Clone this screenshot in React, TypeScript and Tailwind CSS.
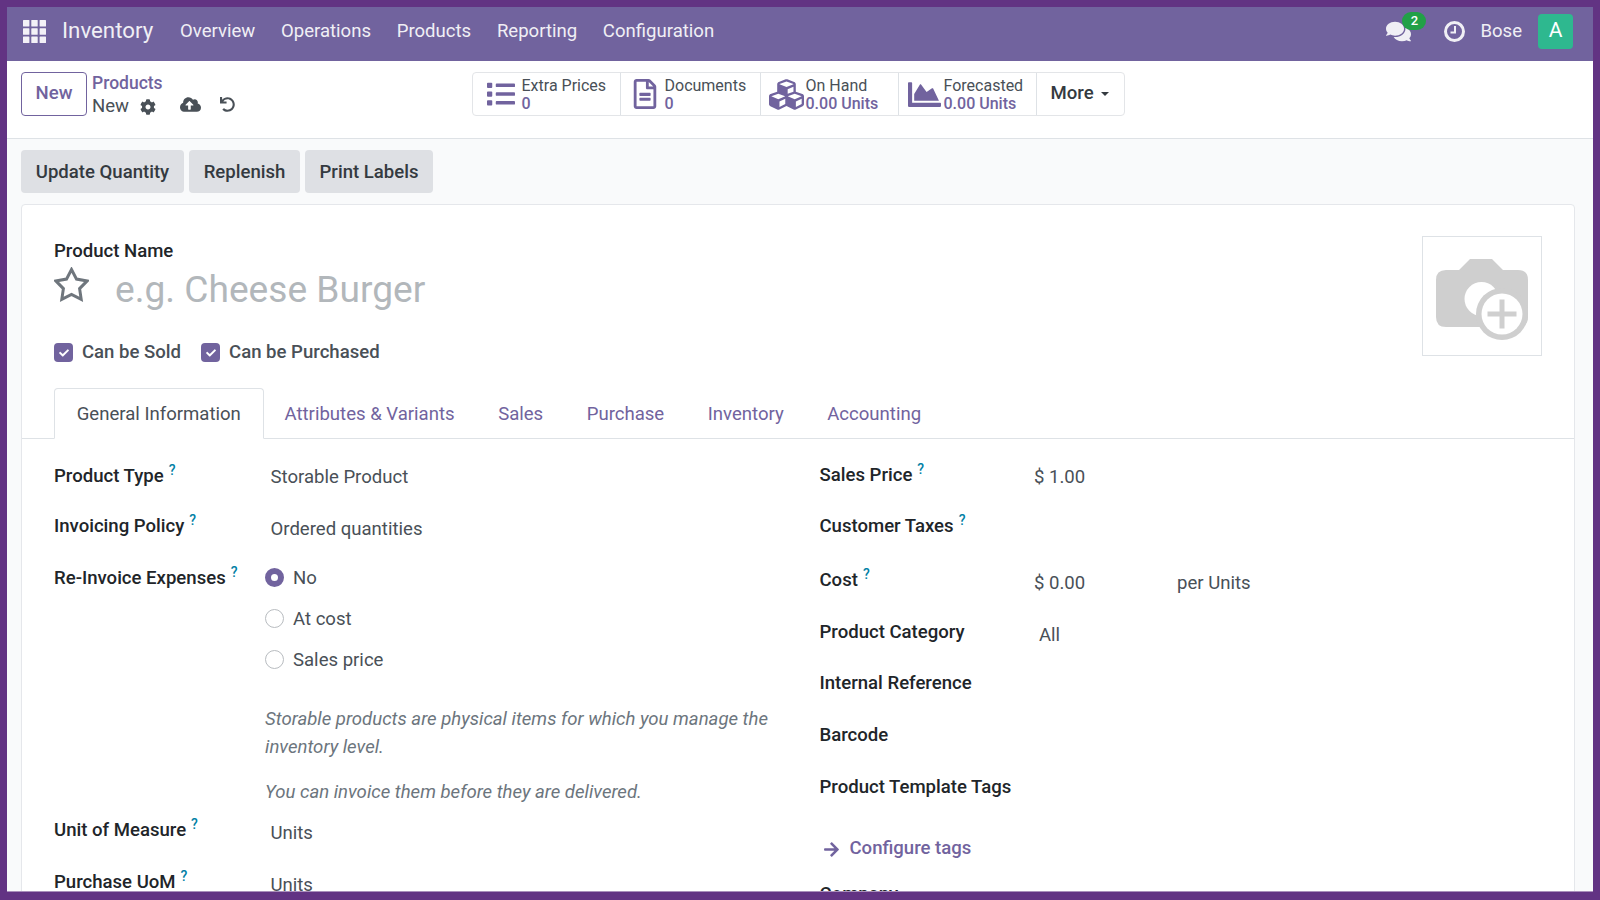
import React from "react";
import { FaList, FaRegFileAlt, FaCubes, FaChartArea, FaCog, FaCloudUploadAlt, FaUndo, FaComments, FaArrowRight, FaCheck } from "react-icons/fa";

const Help = () => <sup className="ml-[5px] text-[14px] font-medium text-[#0180a5] leading-none relative -top-[7.5px]">?</sup>;

function Label({ children, help = false, cls = "" }: { children: React.ReactNode; help?: boolean; cls?: string }) {
  return (
    <div className={"text-[18.57px] leading-[27px] font-medium text-[#212529] whitespace-nowrap " + cls}>
      {children}
      {help && <Help />}
    </div>
  );
}

function Stat({ icon, title, value, w, pad, iconW }: { icon: React.ReactNode; title: string; value: string; w: string; pad: string; iconW: string }) {
  return (
    <div className={"flex items-center border-r border-[#dee2e6] h-full " + w + " " + pad}>
      <div className={"flex justify-start text-[#71639e] " + iconW}>{icon}</div>
      <div className="flex flex-col text-[16px] leading-[18px] pt-[2px]">
        <span className="text-[#495057]">{title}</span>
        <span className="text-[#71639e] font-medium">{value}</span>
      </div>
    </div>
  );
}

function Radio({ on, label }: { on?: boolean; label: string }) {
  return (
    <div className="flex items-center h-[41.2px]">
      {on ? (
        <span className="w-[19px] h-[19px] -mt-[2px] rounded-full border-[6px] border-[#71639e] bg-white" />
      ) : (
        <span className="w-[19px] h-[19px] -mt-[2px] rounded-full border border-[#b8bcc0] bg-white" />
      )}
      <span className="ml-[9px] text-[18.57px] text-[#495057]">{label}</span>
    </div>
  );
}

function Check({ label }: { label: string }) {
  return (
    <div className="flex items-center">
      <span className="w-[19px] h-[19px] rounded-[4px] bg-[#71639e] flex items-center justify-center">
        <FaCheck className="text-white" size={10} />
      </span>
      <span className="ml-[9px] text-[18.57px] font-medium text-[#495057]">{label}</span>
    </div>
  );
}

export default function App() {
  return (
    <div className="h-screen w-full overflow-hidden flex flex-col border-[7px] border-b-[8px] border-[#623383] bg-[#f9fafb] [font-family:Roboto,sans-serif]">
      {/* Navbar */}
      <nav className="h-[54px] shrink-0 bg-[#71639e] flex items-center text-[#f0eff5] pl-[16px] pr-[20px] pb-[6px]">
        <svg width="23" height="23" viewBox="0 0 23 23" fill="#f3f1f7">
          {[0, 8.3, 16.6].map((y) => [0, 8.3, 16.6].map((x) => <rect key={x + "-" + y} x={x} y={y} width="6.4" height="6.4" rx="0.5" />))}
        </svg>
        <span className="ml-[16px] text-[22.3px] w-[118px]">Inventory</span>
        <div className="flex text-[18.57px] gap-[25.7px] pt-[2px]">
          <span>Overview</span>
          <span>Operations</span>
          <span>Products</span>
          <span>Reporting</span>
          <span>Configuration</span>
        </div>
        <div className="ml-auto flex items-center">
          <div className="relative mr-[32px] ml-[1px]">
            <FaComments size={25} />
            <span className="absolute -top-[7px] left-[16px] w-[24px] h-[18px] rounded-full bg-[#21a047] text-white text-[13px] leading-[18px] text-center font-medium">2</span>
          </div>
          <svg width="21" height="21" viewBox="0 0 21 21" fill="none" stroke="#f0eff5" className="ml-[1px]">
            <circle cx="10.5" cy="10.5" r="9" strokeWidth="3" />
            <path d="M11 5 V11.5 H6.5" strokeWidth="2" />
          </svg>
          <span className="ml-[15px] text-[18.57px] pt-[2px]">Bose</span>
          <span className="ml-[16px] w-[35px] h-[35px] rounded-[4px] bg-[#2eb88f] flex items-center justify-center text-white text-[21px]">A</span>
        </div>
      </nav>

      {/* Control panel */}
      <div className="h-[78px] shrink-0 bg-white border-b border-[#dee2e6] flex items-start pt-[11px] pl-[14px]">
        <div className="w-[450.5px] flex">
          <button className="w-[66px] h-[44px] border border-[#71639e] rounded-[4px] text-[#71639e] text-[18.57px] font-medium">New</button>
          <div className="ml-[5px] flex flex-col">
            <span className="text-[17.5px] leading-[23px] font-medium text-[#71639e]">Products</span>
            <div className="flex items-center h-[23px] text-[#495057]">
              <span className="text-[18.57px]">New</span>
              <FaCog size={16} className="ml-[11px]" />
              <FaCloudUploadAlt size={21} className="ml-[24px] -mt-[5px]" />
              <FaUndo size={15} className="ml-[19px] -mt-[4px]" />
            </div>
          </div>
        </div>
        <div className="flex h-[44px] border border-[#e3e5e8] rounded-[4px]">
          <Stat w="w-[148px]" pad="pl-[14px]" iconW="w-[35px]" icon={<FaList size={28} />} title="Extra Prices" value="0" />
          <Stat w="w-[140px]" pad="pl-[9px]" iconW="w-[35px]" icon={<FaRegFileAlt size={30} />} title="Documents" value="0" />
          <Stat w="w-[138px]" pad="pl-[8px]" iconW="w-[37px]" icon={<FaCubes size={35} />} title="On Hand" value="0.00 Units" />
          <Stat w="w-[138px]" pad="pl-[9px]" iconW="w-[36px]" icon={<FaChartArea size={33} />} title="Forecasted" value="0.00 Units" />
          <div className="flex items-center pl-[14px] w-[87px] text-[18.57px] font-medium text-[#343a40]">
            More
            <span className="ml-[7px] w-0 h-0 border-x-[4.5px] border-x-transparent border-t-[4.5px] border-t-[#343a40]" />
          </div>
        </div>
      </div>

      {/* Body */}
      <div className="flex-1 min-h-0 overflow-hidden pl-[14px] pr-[18px]">
        <div className="flex gap-[5px] pt-[11px] h-[65px]">
          {[
            ["Update Quantity", "w-[163px]"],
            ["Replenish", "w-[111px]"],
            ["Print Labels", "w-[128px]"],
          ].map(([t, w]) => (
            <div key={t} className={"h-[43px] pt-[2px] rounded-[4px] bg-[#dee0e4] flex items-center justify-center text-[18.57px] font-medium text-[#343a40] " + w}>{t}</div>
          ))}
        </div>

        {/* Sheet */}
        <div className="bg-white border border-[#e5e7eb] rounded-t-[4px] h-[720px]">
          <div className="h-[183px] px-[32px] pt-[31px] flex justify-between">
            <div>
              <Label cls="leading-[30px]">Product Name</Label>
              <div className="flex items-center h-[47px]">
                <svg width="35" height="35" viewBox="0 0 35 35" fill="none" stroke="#6f767d" strokeWidth="3" className="-mt-[11px] shrink-0">
                  <polygon points="17.5,2.5 22.5,12.1 33.2,13.9 25.6,21.6 27.2,32.3 17.5,27.5 7.8,32.3 9.4,21.6 1.8,13.9 12.5,12.1" />
                </svg>
                <span className="ml-[26px] text-[37.14px] text-[#b2b7bb] leading-[47px]">e.g. Cheese Burger</span>
              </div>
              <div className="flex mt-[26px] gap-[20px]">
                <Check label="Can be Sold" />
                <Check label="Can be Purchased" />
              </div>
            </div>
            <div className="w-[120px] h-[120px] border border-[#dee2e6]">
              <svg width="118" height="118" viewBox="1 1 118 118">
                <path d="M37 34 L48 23 H70 L81 34 H96 Q106 34 106 44 V81 Q106 91 96 91 H24 Q14 91 14 81 V44 Q14 34 24 34 Z" fill="#cfcfcf" />
                <circle cx="59.5" cy="63" r="17" fill="#fff" />
                <circle cx="80" cy="78" r="26" fill="#cfcfcf" />
                <circle cx="80" cy="78" r="20.5" fill="#fff" />
                <rect x="65.5" y="75.5" width="29" height="5" fill="#cfcfcf" />
                <rect x="77.5" y="63.5" width="5" height="29" fill="#cfcfcf" />
              </svg>
            </div>
          </div>

          {/* Tabs */}
          <div className="h-[51px] border-b border-[#dee2e6] pl-[32px] flex text-[18.57px]">
            <div className="h-[51px] w-[209.5px] pt-[2px] border border-[#dee2e6] border-b-white rounded-t-[4px] bg-white flex items-center justify-center text-[#495057]">General Information</div>
            <div className="flex items-center pl-[21px] pt-[2px] gap-[43.5px] text-[#71639e] h-[51px]">
              <span>Attributes &amp; Variants</span>
              <span>Sales</span>
              <span>Purchase</span>
              <span>Inventory</span>
              <span>Accounting</span>
            </div>
          </div>

          {/* Form */}
          <div className="flex pl-[32px] pt-[12px]">
            <div className="w-[765.5px] shrink-0">
              <div className="flex h-[51px]">
                <Label help cls="w-[216.5px] pt-[12px]">Product Type</Label>
                <span className="pt-[13px] text-[18.57px] leading-[27px] text-[#495057]">Storable Product</span>
              </div>
              <div className="flex h-[51px]">
                <Label help cls="w-[216.5px] pt-[11px]">Invoicing Policy</Label>
                <span className="pt-[14px] text-[18.57px] leading-[27px] text-[#495057]">Ordered quantities</span>
              </div>
              <div className="flex h-[131px]">
                <Label help cls="w-[211px] pt-[12px]">Re-Invoice Expenses</Label>
                <div className="pt-[5px]">
                  <Radio on label="No" />
                  <Radio label="At cost" />
                  <Radio label="Sales price" />
                </div>
              </div>
              <div className="h-[122px] ml-[211px] w-[530px] text-[18.57px] italic text-[#6c757d] leading-[27.5px] pt-[22px]">
                <p>Storable products are physical items for which you manage the inventory level.</p>
                <p className="mt-[18px]">You can invoice them before they are delivered.</p>
              </div>
              <div className="flex h-[52px]">
                <Label help cls="w-[216.5px] pt-[11px]">Unit of Measure</Label>
                <span className="pt-[14px] text-[18.57px] leading-[27px] text-[#495057]">Units</span>
              </div>
              <div className="flex h-[51px]">
                <Label help cls="w-[216.5px] pt-[11px]">Purchase UoM</Label>
                <span className="pt-[14px] text-[18.57px] leading-[27px] text-[#495057]">Units</span>
              </div>
            </div>
            <div className="flex-1">
              <div className="flex h-[51px]">
                <Label help cls="w-[214.5px] pt-[11px]">Sales Price</Label>
                <span className="pt-[13px] text-[18.57px] leading-[27px] text-[#495057]">$ 1.00</span>
              </div>
              <div className="h-[53px]"><Label help cls="pt-[11px]">Customer Taxes</Label></div>
              <div className="flex h-[52px]">
                <Label help cls="w-[214.5px] pt-[12px]">Cost</Label>
                <span className="pt-[15px] w-[143px] text-[18.57px] leading-[27px] text-[#495057]">$ 0.00</span>
                <span className="pt-[15px] text-[18.57px] leading-[27px] text-[#495057]">per Units</span>
              </div>
              <div className="flex h-[52px]">
                <Label cls="w-[219.5px] pt-[12px]">Product Category</Label>
                <span className="pt-[15px] text-[18.57px] leading-[27px] text-[#495057]">All</span>
              </div>
              <div className="h-[51px]"><Label cls="pt-[11px]">Internal Reference</Label></div>
              <div className="h-[52px]"><Label cls="pt-[12px]">Barcode</Label></div>
              <div className="h-[60px]"><Label cls="pt-[12px]">Product Template Tags</Label></div>
              <div className="h-[51px] flex items-start pt-[14px] pl-[3px] text-[#71639e]">
                <FaArrowRight size={17} className="mt-[5px]" />
                <span className="ml-[10px] text-[18.57px] leading-[25px] font-medium">Configure tags</span>
              </div>
              <Label cls="pt-[8px]">Company</Label>
            </div>
          </div>
        </div>
      </div>
      <div className="h-px shrink-0 bg-[#a98fbb]" />
    </div>
  );
}
